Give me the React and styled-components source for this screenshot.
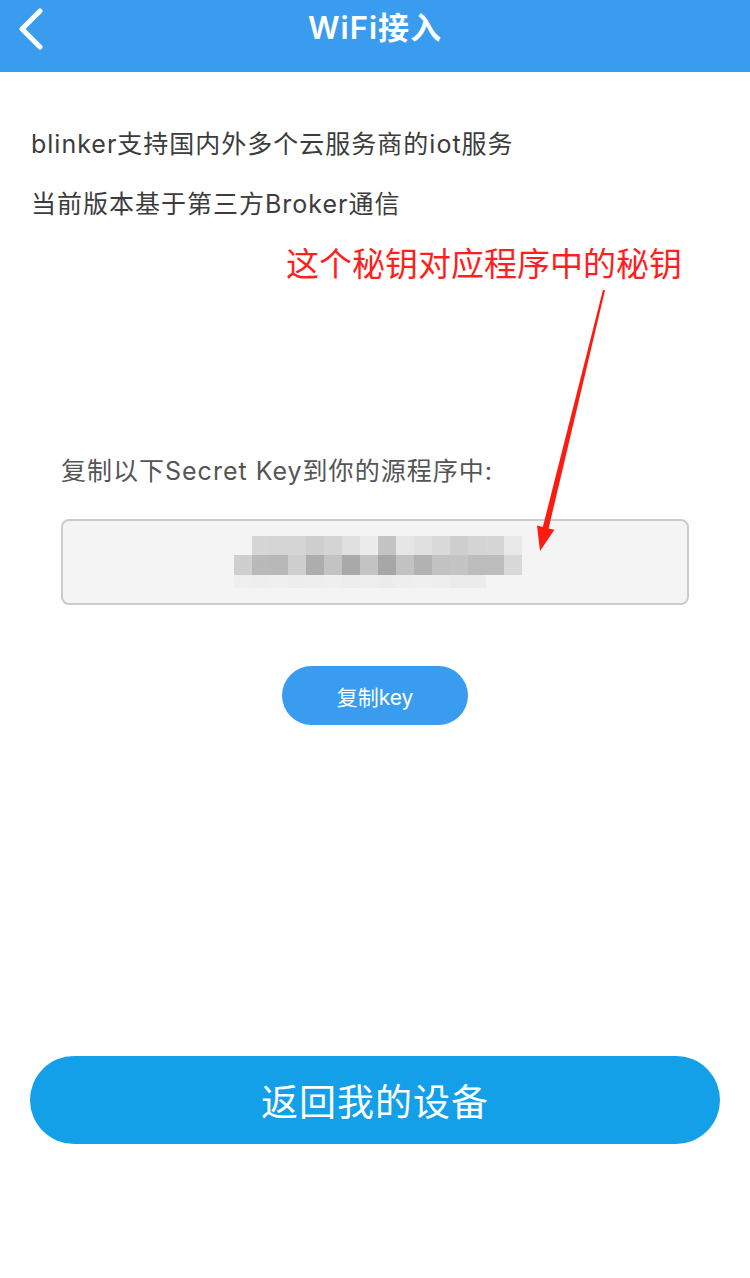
import React from "react";
import styled, { createGlobalStyle } from "styled-components";

const FONT = `"Inter", "Noto Sans CJK SC", "Noto Sans", sans-serif`;
const BLUE = "#3a9cee";

const GlobalStyle = createGlobalStyle`
  html, body {
    margin: 0;
    padding: 0;
    background: #fff;
    font-family: ${FONT};
  }
`;

const Page = styled.div`
  position: relative;
  width: 750px;
  min-height: 1278px;
  background: #fff;
  display: flex;
  flex-direction: column;
`;

const Header = styled.header`
  height: 72px;
  background: ${BLUE};
  display: flex;
  align-items: flex-start;
  justify-content: center;
  position: relative;
`;

const BackButton = styled.button`
  position: absolute;
  left: 9px;
  top: 4px;
  width: 40px;
  height: 48px;
  padding: 0;
  border: none;
  background: transparent;
  display: flex;
  align-items: center;
  justify-content: center;
`;

const Title = styled.h1`
  margin: 0;
  line-height: 56px;
  font-size: 31px;
  font-weight: 600;
  letter-spacing: 1px;
  color: #fff;
`;

const Intro = styled.section`
  margin-top: 42px;
  padding-left: 31px;
  display: flex;
  flex-direction: column;
`;

const Line = styled.p`
  margin: 0;
  line-height: 60px;
  font-size: 25px;
  letter-spacing: 1px;
  color: #3c3c3c;
`;

const Note = styled.p`
  margin: 0;
  align-self: flex-end;
  padding-right: 68px;
  line-height: 60px;
  font-size: 33px;
  color: #ff1f1f;
`;

const KeySection = styled.section`
  margin-top: 157px;
  padding: 0 61px;
  display: flex;
  flex-direction: column;
`;

const KeyLabel = styled.p`
  margin: 0;
  line-height: 40px;
  font-size: 25px;
  letter-spacing: 1px;
  color: #555;
`;

const KeyBox = styled.div`
  margin-top: 28px;
  height: 86px;
  box-sizing: border-box;
  border: 2px solid #cbcbcb;
  border-radius: 8px;
  background: #f4f4f4;
  display: flex;
  align-items: center;
  justify-content: center;
  padding-left: 6px;
`;

const Pixels = styled.div`
  display: grid;
  grid-template-columns: repeat(16, 18px);
  grid-template-rows: 19px 20px 13px;
`;

const Pixel = styled.span`
  background: ${(p) => p.$shade};
`;

const CopyButton = styled.button`
  align-self: center;
  margin-top: 61px;
  width: 186px;
  height: 59px;
  border: none;
  border-radius: 30px;
  background: ${BLUE};
  color: #fff;
  font-family: ${FONT};
  font-size: 21px;
`;

const ReturnButton = styled.button`
  margin: 331px 30px 0;
  height: 88px;
  border: none;
  border-radius: 44px;
  background: #13a0e8;
  color: #fff;
  font-family: ${FONT};
  font-size: 37px;
  letter-spacing: 1px;
`;

const Annotation = styled.svg`
  position: absolute;
  left: 0;
  top: 0;
  pointer-events: none;
`;

const PIXEL_ROWS = [
  ["#f4f4f4", "#d6d6d6", "#d5d5d5", "#d6d6d6", "#cfcfcf", "#d4d4d4", "#e0e0e0", "#ececec", "#c4c4c4", "#e6e6e6", "#e0e0e0", "#dadada", "#cfcfcf", "#d4d4d4", "#d6d6d6", "#e8e8e8"],
  ["#cfcfcf", "#b9b9b9", "#b8b8b8", "#cfcfcf", "#adadad", "#c3c3c3", "#a9a9a9", "#c3c3c3", "#a7a7a7", "#c2c2c2", "#b2b2b2", "#c2c2c2", "#c4c4c4", "#bcbcbc", "#bcbcbc", "#d8d8d8"],
  ["#efefef", "#eeeeee", "#efefef", "#ededed", "#eeeeee", "#efefef", "#ededed", "#eeeeee", "#ececec", "#eeeeee", "#efefef", "#eeeeee", "#ebebeb", "#ececec", "#f4f4f4", "#f4f4f4"],
];

const App = () => (
  <>
    <GlobalStyle />
    <Page>
      <Header>
        <BackButton aria-label="返回">
          <svg width="30" height="44" viewBox="0 0 30 44">
            <path
              d="M26 5 L8 23 L26 41"
              fill="none"
              stroke="#fff"
              strokeWidth="5"
              strokeLinecap="round"
              strokeLinejoin="round"
            />
          </svg>
        </BackButton>
        <Title>WiFi接入</Title>
      </Header>

      <Intro>
        <Line>blinker支持国内外多个云服务商的iot服务</Line>
        <Line>当前版本基于第三方Broker通信</Line>
        <Note>这个秘钥对应程序中的秘钥</Note>
      </Intro>

      <KeySection>
        <KeyLabel>复制以下Secret Key到你的源程序中:</KeyLabel>
        <KeyBox>
          <Pixels>
            {PIXEL_ROWS.flat().map((shade, i) => (
              <Pixel key={i} $shade={shade} />
            ))}
          </Pixels>
        </KeyBox>
        <CopyButton>复制key</CopyButton>
      </KeySection>

      <ReturnButton>返回我的设备</ReturnButton>

      <Annotation width="750" height="1278" viewBox="0 0 750 1278">
        <polygon
          points="603,289.8 605,290.2 548.6,528.4 554.4,529.8 540,551 537,525.6 542.8,527"
          fill="#ff1a0f"
        />
      </Annotation>
    </Page>
  </>
);

export default App;
